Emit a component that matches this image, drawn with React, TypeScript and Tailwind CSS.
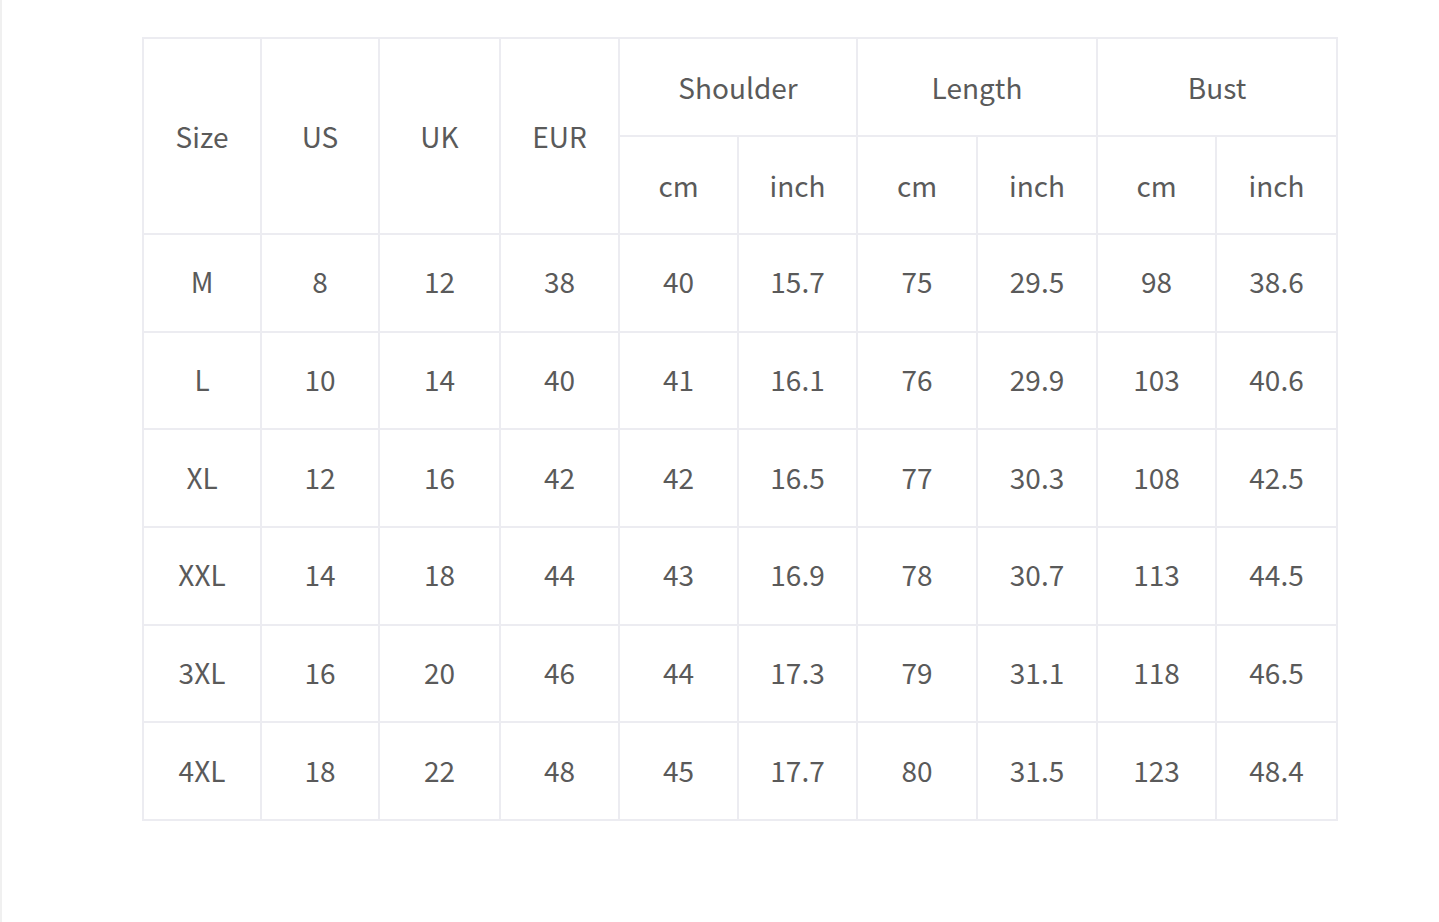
import React from 'react';

const rows: string[][] = [
  ['M', '8', '12', '38', '40', '15.7', '75', '29.5', '98', '38.6'],
  ['L', '10', '14', '40', '41', '16.1', '76', '29.9', '103', '40.6'],
  ['XL', '12', '16', '42', '42', '16.5', '77', '30.3', '108', '42.5'],
  ['XXL', '14', '18', '44', '43', '16.9', '78', '30.7', '113', '44.5'],
  ['3XL', '16', '20', '46', '44', '17.3', '79', '31.1', '118', '46.5'],
  ['4XL', '18', '22', '48', '45', '17.7', '80', '31.5', '123', '48.4'],
];

const widths = [118, 118, 121, 119, 119, 119, 120, 120, 119, 121];

const cell = 'border-2 border-[#ececf1] text-center align-middle font-normal';

export default function App() {
  return (
    <div
      className="w-[1439px] h-[922px] bg-white border-l-2 border-[#f0f0f0] text-[#5a5a5a] text-[28px]"
      style={{ fontFamily: '"Noto Sans CJK SC", "Noto Sans", sans-serif' }}
    >
      <div className="pt-[37px] pl-[140px]">
        <table className="table-fixed border-collapse w-[1196px]">
          <colgroup>
            {widths.map((w, i) => (
              <col key={i} style={{ width: w }} />
            ))}
          </colgroup>
          <thead>
            <tr className="h-[98px]">
              <th rowSpan={2} className={cell}>Size</th>
              <th rowSpan={2} className={cell}>US</th>
              <th rowSpan={2} className={cell}>UK</th>
              <th rowSpan={2} className={cell}>EUR</th>
              <th colSpan={2} className={cell}>Shoulder</th>
              <th colSpan={2} className={cell}>Length</th>
              <th colSpan={2} className={cell}>Bust</th>
            </tr>
            <tr className="h-[98px]">
              <th className={cell}>cm</th>
              <th className={cell}>inch</th>
              <th className={cell}>cm</th>
              <th className={cell}>inch</th>
              <th className={cell}>cm</th>
              <th className={cell}>inch</th>
            </tr>
          </thead>
          <tbody>
            {rows.map((r) => (
              <tr key={r[0]} className="h-[97.7px]">
                {r.map((v, i) => (
                  <td key={i} className={`${cell} pb-[3px]`}>{v}</td>
                ))}
              </tr>
            ))}
          </tbody>
        </table>
      </div>
    </div>
  );
}
